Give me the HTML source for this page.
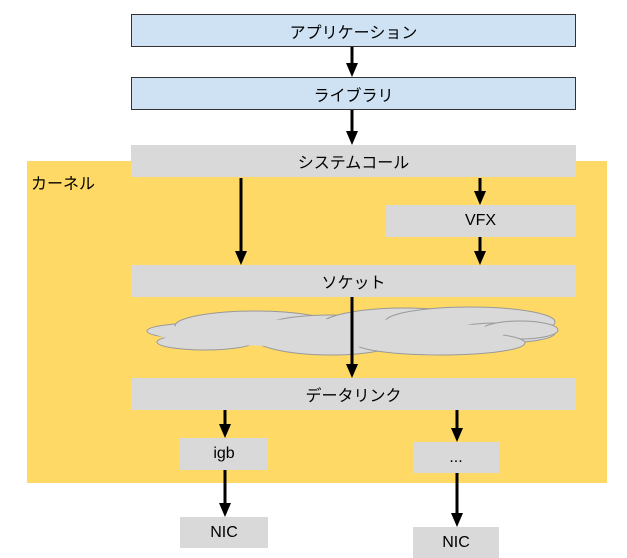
<!DOCTYPE html><html><head><meta charset="utf-8"><style>
body{margin:0;width:627px;height:557px;background:#fff;position:relative;overflow:hidden;font-family:"Liberation Sans","Noto Sans CJK JP",sans-serif;}
.b{position:absolute;display:flex;align-items:center;justify-content:center;font-size:16px;color:#000;box-sizing:border-box}
.blue{background:#cfe2f3;border:1px solid #333}
.g{background:#d9d9d9}
svg{position:absolute;left:0;top:0}
</style></head><body>
<div style="position:absolute;left:27px;top:161px;width:580px;height:322px;background:#ffd966"></div>
<div class="b" style="left:31px;top:170px;">カーネル</div>
<div class="b blue" style="left:131px;top:14px;width:445px;height:33px">アプリケーション</div>
<div class="b blue" style="left:131px;top:77px;width:445px;height:33px">ライブラリ</div>
<div class="b g" style="left:131px;top:145px;width:445px;height:32px">システムコール</div>
<div class="b g" style="left:385px;top:205px;width:191px;height:32px">VFX</div>
<div class="b g" style="left:131px;top:265px;width:445px;height:32px">ソケット</div>
<svg width="627" height="557">
<g fill="#d9d9d9" stroke="#999" stroke-width="1">
<ellipse cx="200" cy="331" rx="53" ry="8"/>
<ellipse cx="205" cy="342" rx="48" ry="8"/>
<ellipse cx="255" cy="326" rx="80" ry="15"/>
<ellipse cx="330" cy="335" rx="80" ry="20"/>
<ellipse cx="405" cy="326" rx="85" ry="18"/>
<ellipse cx="470" cy="322" rx="85" ry="15"/>
<ellipse cx="500" cy="333" rx="55" ry="10"/>
<ellipse cx="520" cy="330" rx="38" ry="9"/>
<ellipse cx="440" cy="343" rx="85" ry="12"/>
</g>
<g fill="#d9d9d9">
<ellipse cx="330" cy="333" rx="175" ry="14"/>
</g>
<g stroke="#000" stroke-width="3">
<line x1="352" y1="47" x2="352" y2="65"/><line x1="352" y1="110" x2="352" y2="133"/>
<line x1="241" y1="178" x2="241" y2="252"/><line x1="480" y1="178" x2="480" y2="193"/>
<line x1="480" y1="237" x2="480" y2="253"/><line x1="352" y1="297" x2="352" y2="366"/>
<line x1="225" y1="410" x2="225" y2="426"/><line x1="457" y1="410" x2="457" y2="430"/>
<line x1="225" y1="470" x2="225" y2="505"/><line x1="457" y1="473" x2="457" y2="515"/>
</g>
<g fill="#000">
<path d="M346 63h12l-6 14z"/><path d="M346 131h12l-6 14z"/>
<path d="M235 251h12l-6 14z"/><path d="M474 191h12l-6 14z"/>
<path d="M474 251h12l-6 14z"/><path d="M346 364h12l-6 14z"/>
<path d="M219 424h12l-6 14z"/><path d="M451 428h12l-6 14z"/>
<path d="M219 503h12l-6 14z"/><path d="M451 513h12l-6 14z"/>
</g>
</svg>
<div class="b g" style="left:131px;top:378px;width:445px;height:32px">データリンク</div>
<div class="b g" style="left:180px;top:438px;width:88px;height:32px">igb</div>
<div class="b g" style="left:413px;top:442px;width:86px;height:31px">...</div>
<div class="b g" style="left:180px;top:517px;width:88px;height:31px">NIC</div>
<div class="b g" style="left:413px;top:527px;width:86px;height:31px">NIC</div>
</body></html>
